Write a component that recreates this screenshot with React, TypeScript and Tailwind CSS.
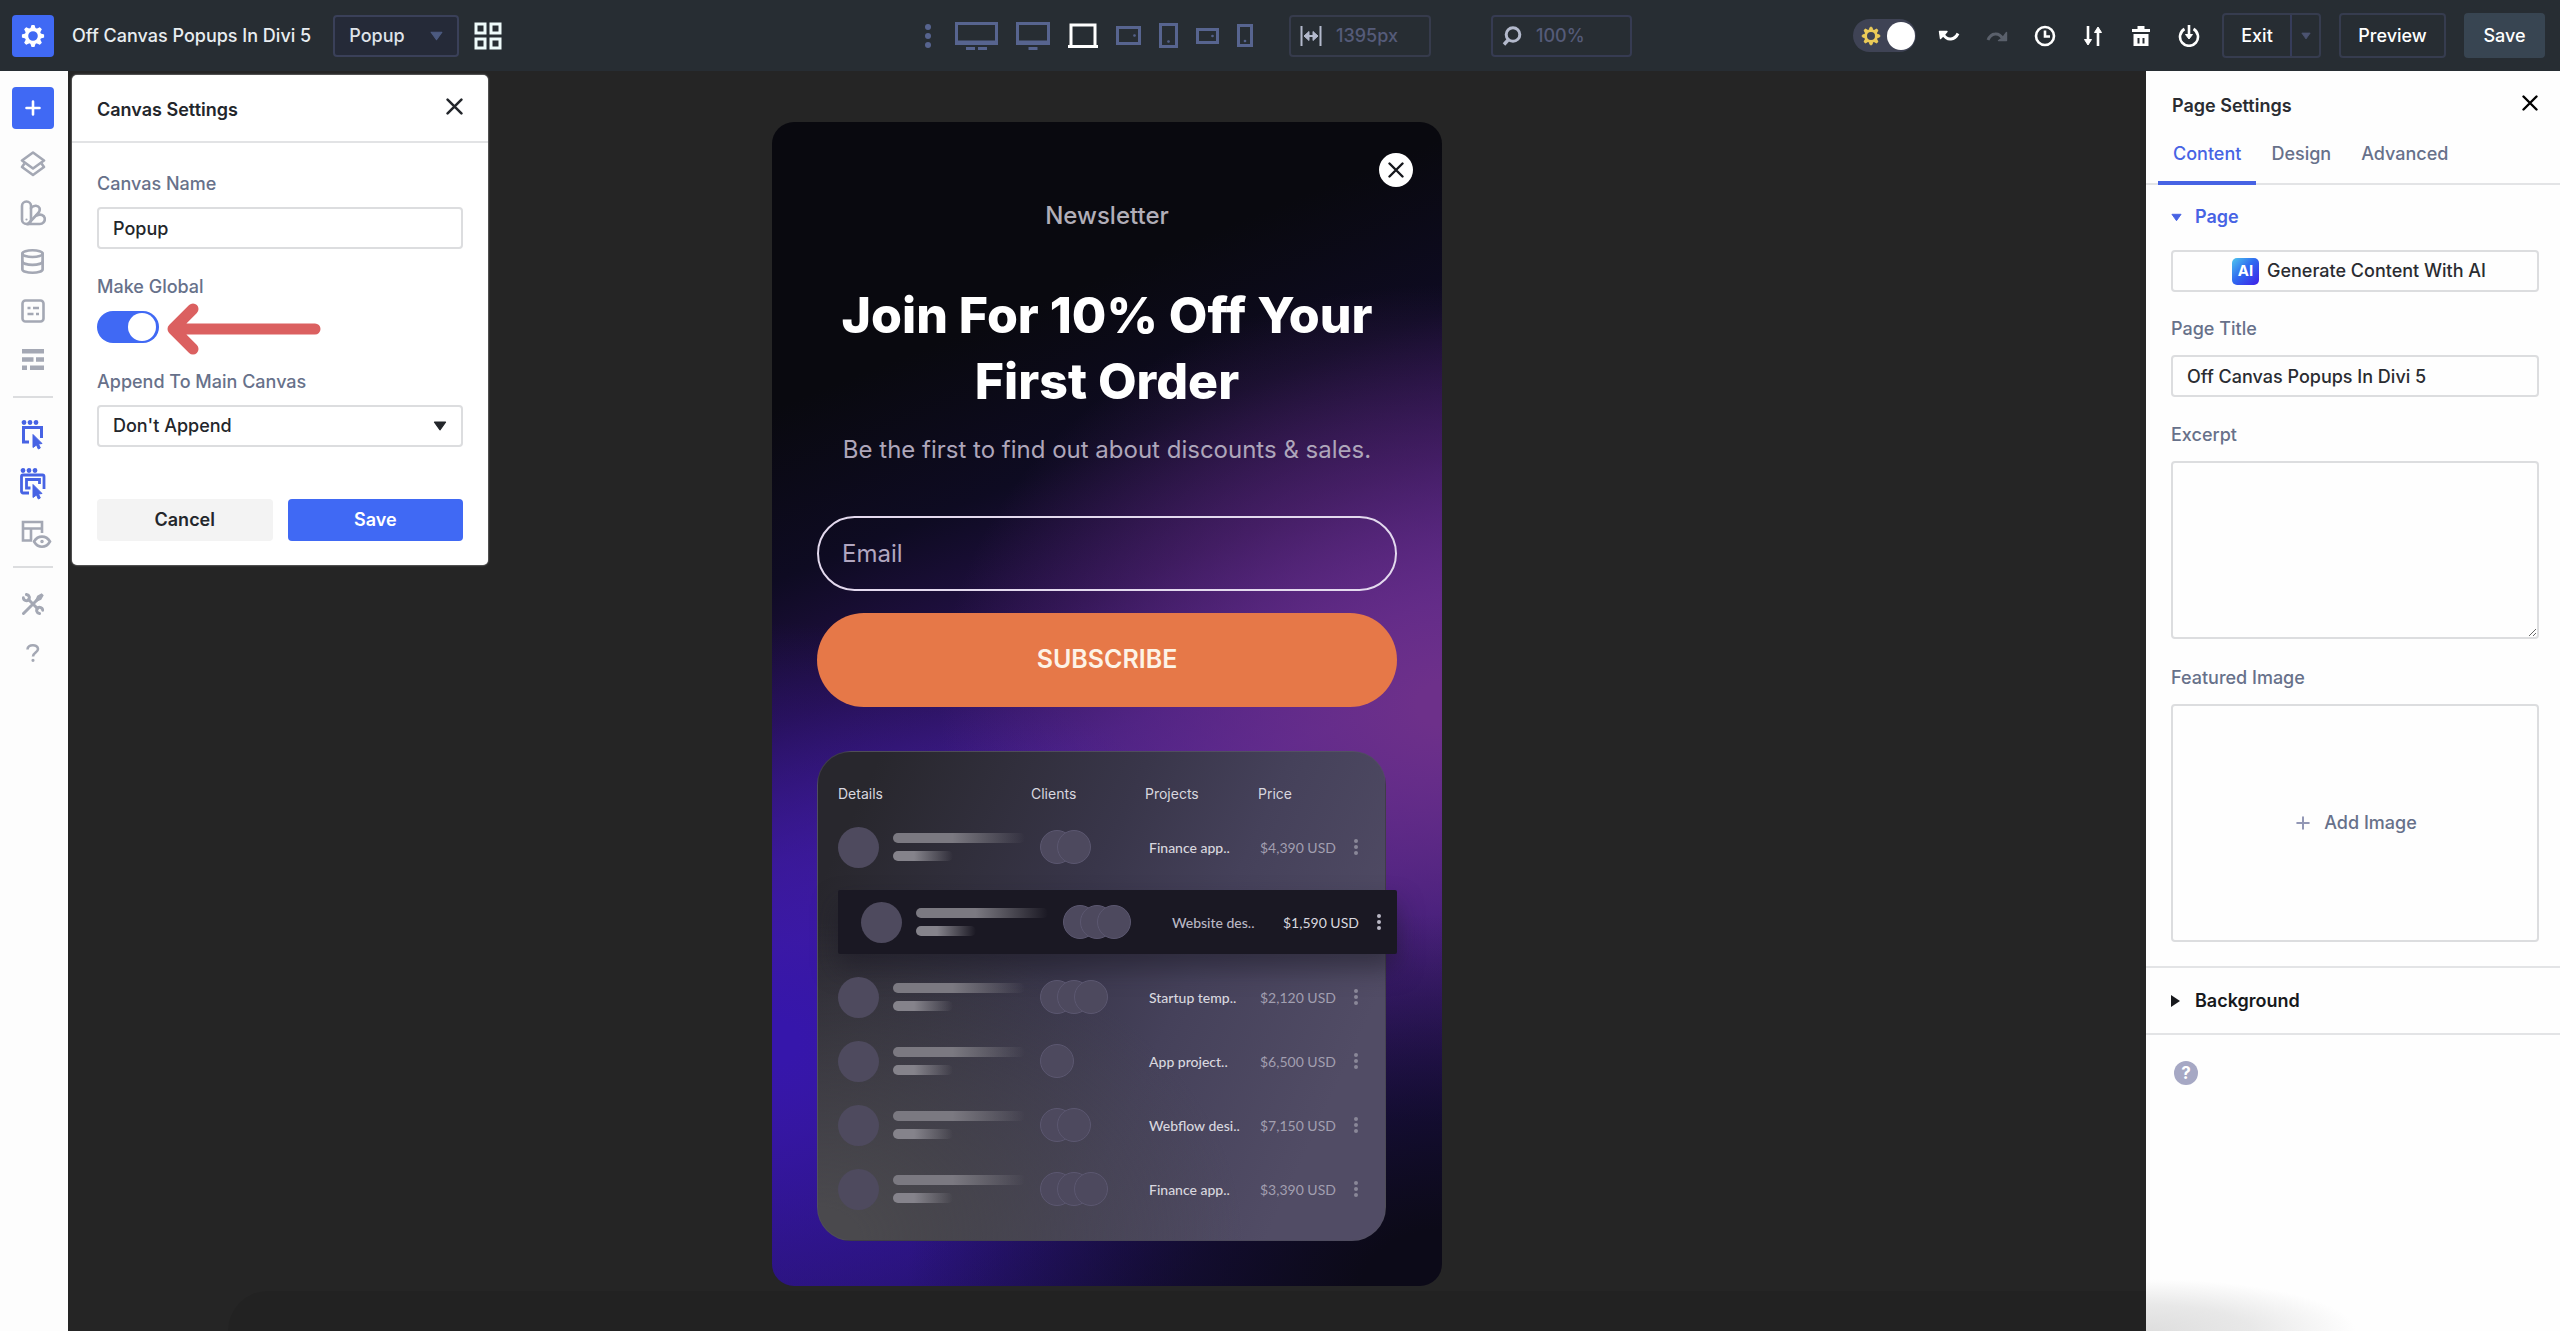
import React from 'react';
import { Database, Plus } from 'lucide-react';
import clsx from 'clsx';

interface Device {
  label: string;
  width: number;
  height: number;
  shape: React.ReactNode;
  active?: boolean;
}

interface ProjectRow {
  project: string;
  price: string;
  clients: number;
  highlighted?: boolean;
}

const devices: Device[] = [
  {
    label: 'Widescreen',
    width: 43,
    height: 28,
    shape: (
      <>
        <path d="M1.5 1.5h40v20h-40z" />
        <path d="M1 20.5h41" strokeWidth={4} />
        <path d="M11 26.5h9M23 26.5h9" />
      </>
    ),
  },
  {
    label: 'Desktop',
    width: 34,
    height: 28,
    shape: (
      <>
        <path d="M1.5 1.5h31v20h-31z" />
        <path d="M1 20.5h32" strokeWidth={4} />
        <path d="M12.5 26.5h9" />
      </>
    ),
  },
  {
    label: 'Laptop',
    width: 30,
    height: 25,
    active: true,
    shape: (
      <>
        <path d="M3 23V2h24v21" />
        <path d="M0 23.5h30" />
      </>
    ),
  },
  {
    label: 'Tablet landscape',
    width: 25,
    height: 19,
    shape: (
      <>
        <path d="M1.5 1.5h22v16h-22z" />
        <circle cx="18.5" cy="9.5" r=".6" strokeWidth={1.5} />
      </>
    ),
  },
  {
    label: 'Tablet',
    width: 19,
    height: 25,
    shape: (
      <>
        <path d="M1.5 1.5h16v22h-16z" />
        <circle cx="9.5" cy="18.5" r=".6" strokeWidth={1.5} />
      </>
    ),
  },
  {
    label: 'Phone landscape',
    width: 23,
    height: 16,
    shape: (
      <>
        <path d="M1.5 1.5h20v13h-20z" />
        <circle cx="16.5" cy="8" r=".6" strokeWidth={1.5} />
      </>
    ),
  },
  {
    label: 'Phone',
    width: 16,
    height: 23,
    shape: (
      <>
        <path d="M1.5 1.5h13v20h-13z" />
        <circle cx="8" cy="17" r=".6" strokeWidth={1.5} />
      </>
    ),
  },
];

const projectRows: ProjectRow[] = [
  { project: 'Finance app..', price: '$4,390 USD', clients: 2 },
  { project: 'Website des..', price: '$1,590 USD', clients: 3, highlighted: true },
  { project: 'Startup temp..', price: '$2,120 USD', clients: 3 },
  { project: 'App project..', price: '$6,500 USD', clients: 1 },
  { project: 'Webflow desi..', price: '$7,150 USD', clients: 2 },
  { project: 'Finance app..', price: '$3,390 USD', clients: 3 },
];

const teeth = [0, 45, 90, 135, 180, 225, 270, 315];

function GearIcon({ className }: { className?: string }) {
  return (
    <svg className={className} viewBox="0 0 24 24" fill="none" stroke="currentColor" aria-hidden="true">
      <circle cx="12" cy="12" r="6.5" strokeWidth={3.4} />
      {teeth.map((angle) => (
        <path key={angle} d="M10 4.5 11 1.5h2l1 3z" fill="currentColor" strokeWidth={1.2} transform={`rotate(${angle} 12 12)`} />
      ))}
    </svg>
  );
}

function CloseIcon({ className }: { className?: string }) {
  return (
    <svg className={className} viewBox="0 0 16 16" fill="none" stroke="currentColor" strokeWidth={2.4} strokeLinecap="round" aria-hidden="true">
      <path d="M1.5 1.5l13 13M14.5 1.5l-13 13" />
    </svg>
  );
}

function CaretDown({ className }: { className?: string }) {
  return (
    <svg className={className} viewBox="0 0 12 9" fill="currentColor" stroke="currentColor" strokeLinejoin="round" aria-hidden="true">
      <path d="M1 1h10L6 8z" />
    </svg>
  );
}

function KebabDots({ className }: { className?: string }) {
  return (
    <svg className={className} viewBox="0 0 6 24" fill="currentColor" aria-hidden="true">
      <circle cx="3" cy="3" r="3" />
      <circle cx="3" cy="12" r="3" />
      <circle cx="3" cy="21" r="3" />
    </svg>
  );
}

function ToolbarButton({ label, className, children }: { label: string; className?: string; children: React.ReactNode }) {
  return (
    <button type="button" aria-label={label} className={clsx('flex w-[22px] justify-center', className ?? 'text-white')}>
      <svg className="size-[22px]" viewBox="0 0 22 22" fill="none" stroke="currentColor" strokeWidth={2.6} aria-hidden="true">
        {children}
      </svg>
    </button>
  );
}

function TopBar() {
  return (
    <header className="grid h-[71px] grid-cols-[1fr_auto_1fr] items-center bg-[#272d33] pl-3 pr-[15px] font-medium">
      <div className="flex items-center">
        <button type="button" aria-label="Builder settings" className="flex size-[42px] items-center justify-center rounded-[4px] bg-[#4069f4] text-white">
          <GearIcon className="size-6" />
        </button>
        <h1 className="ml-[18px] text-[18px] leading-6 text-[#e9edf1]">Off Canvas Popups In Divi 5</h1>
        <div className="relative ml-[22px]">
          <select aria-label="Active canvas" className="h-[42px] w-[126px] appearance-none rounded-[4px] border-2 border-[#3a4059] bg-[#252a38] pl-[14px] text-[18px] text-[#dfe3ea]">
            <option>Popup</option>
          </select>
          <CaretDown className="pointer-events-none absolute right-4 top-4 h-[10px] w-[13px] text-[#4c5a80]" />
        </div>
        <button type="button" aria-label="All canvases" className="ml-[15px] text-[#eefafa]">
          <svg className="size-7" viewBox="0 0 28 28" fill="none" stroke="currentColor" strokeWidth={3} aria-hidden="true">
            <path d="M2 2h9v9H2zM17 2h9v9h-9zM2 17h9v9H2zM17 17h9v9h-9z" />
          </svg>
        </button>
      </div>

      <div className="flex items-center text-[#57648f]">
        <button type="button" aria-label="Breakpoint options" className="mr-6">
          <KebabDots className="h-6 w-[6px]" />
        </button>
        <div className="flex items-center gap-[18px]">
          {devices.map((device) => (
            <button key={device.label} type="button" aria-label={device.label} className={clsx(device.active && 'text-white')}>
              <svg width={device.width} height={device.height} viewBox={`0 0 ${device.width} ${device.height}`} fill="none" stroke="currentColor" strokeWidth={3} aria-hidden="true">
                {device.shape}
              </svg>
            </button>
          ))}
        </div>
        <label className="ml-9 flex h-[42px] w-[142px] items-center gap-[14px] rounded-[4px] border-2 border-[#363b4c] pl-[9px]">
          <svg className="h-5 w-[22px] shrink-0 text-[#b3b9cc]" viewBox="0 0 22 20" fill="none" stroke="currentColor" strokeWidth={2} aria-hidden="true">
            <path d="M1.5 0v20M20.5 0v20M6 10h10" />
            <path d="M4 10l5-4.500v9zM18 10l-5-4.500v9z" fill="currentColor" strokeWidth={1} />
          </svg>
          <input aria-label="Canvas width" defaultValue="1395px" className="w-20 bg-transparent text-[18px] text-[#555b79] outline-none" />
        </label>
        <label className="ml-[60px] flex h-[42px] w-[141px] items-center gap-[14px] rounded-[4px] border-2 border-[#363b52] pl-[9px]">
          <svg className="size-5 shrink-0 text-[#b3b9cc]" viewBox="0 0 20 20" fill="none" stroke="currentColor" strokeWidth={3} aria-hidden="true">
            <circle cx="11" cy="8.5" r="6.8" />
            <path d="M6.5 13.5L2 18.5" strokeWidth={3.4} />
          </svg>
          <input aria-label="Zoom level" defaultValue="100%" className="w-20 bg-transparent text-[18px] text-[#555b79] outline-none" />
        </label>
      </div>

      <div className="flex items-center justify-end">
        <label className="relative flex h-[33px] w-[63px] items-center rounded-full bg-[#3f4355] pl-2">
          <input type="checkbox" defaultChecked aria-label="Light mode" className="sr-only" />
          <GearIcon className="size-5 text-[#eccb58]" />
          <span className="ml-[6px] size-7 rounded-full bg-white" />
        </label>
        <div className="ml-[22px] flex items-center gap-[26px]">
          <ToolbarButton label="Undo">
            <path d="M5 9c2 3.500 4.500 5.500 8 5 3.500-.3 5.500-2.500 7-5.500" strokeWidth={3} />
            <path d="M1.500 6.500h7.500l-2.500 3-4 4z" fill="currentColor" strokeWidth={1.400} strokeLinejoin="round" />
          </ToolbarButton>
          <ToolbarButton label="Redo" className="text-[#5a606b]">
            <path d="M2 15c1.500-3.500 3.500-5.700 7-6 3.500-.4 6 1.500 8 5" strokeWidth={3} />
            <path d="M20.500 7.500v8h-8l4-2.500z" fill="currentColor" strokeWidth={1.400} strokeLinejoin="round" />
          </ToolbarButton>
          <ToolbarButton label="History">
            <circle cx="11" cy="11" r="9" />
            <path d="M11 5.5v6h5" />
          </ToolbarButton>
          <ToolbarButton label="Portability">
            <path d="M6 1v14M16 21V7" />
            <path d="M2.5 14.5h7L6 20zM12.5 7.500h7L16 2z" fill="currentColor" strokeWidth={1} />
          </ToolbarButton>
          <ToolbarButton label="Clear layout">
            <path d="M2 5.5h18" strokeWidth={3} />
            <path d="M7.500 2.500h7" strokeWidth={3} />
            <path d="M3.500 9h15v12h-15zM7.500 13v5.500h2V13zM12.500 13v5.500h2V13z" fill="currentColor" fillRule="evenodd" stroke="none" />
          </ToolbarButton>
          <ToolbarButton label="Save to library">
            <path d="M6.5 4a9 9 0 1 0 9 0M11 0v12" />
            <path d="M7.5 9.500h7L11 14z" fill="currentColor" strokeWidth={1} />
          </ToolbarButton>
        </div>
        <div className="ml-[22px] flex h-[45px] rounded-[4px] border-2 border-[#363c4f] text-[18px] text-white">
          <button type="button" className="w-[68px] border-r-2 border-[#363c5a]">Exit</button>
          <button type="button" aria-label="Exit options" className="flex w-[27px] items-center justify-center text-[#4c5370]">
            <CaretDown className="h-2 w-[10px]" />
          </button>
        </div>
        <button type="button" className="ml-[18px] h-[45px] w-[107px] rounded-[4px] border-2 border-[#363c4f] text-[18px] text-white">Preview</button>
        <button type="button" className="ml-[18px] h-[45px] w-[81px] rounded-[4px] bg-[#384552] text-[18px] text-white">Save</button>
      </div>
    </header>
  );
}

function SideButton({ label, active, children }: { label: string; active?: boolean; children: React.ReactNode }) {
  return (
    <button type="button" aria-label={label} className={clsx('flex h-[49px] w-full items-center justify-center', active ? 'text-[#4763e4]' : 'text-[#a4a8b4]')}>
      {children}
    </button>
  );
}

function Sidebar() {
  return (
    <nav aria-label="Builder tools" className="flex w-[68px] shrink-0 flex-col items-center bg-[#fdfdfd] pr-[3px] pt-4">
      <button type="button" aria-label="Add" className="flex size-[42px] shrink-0 items-center justify-center rounded-[4px] bg-[#4069f4] text-white">
        <svg className="size-4" viewBox="0 0 16 16" stroke="currentColor" strokeWidth={2.6} strokeLinecap="round" aria-hidden="true">
          <path d="M8 1.5v13M1.5 8h13" />
        </svg>
      </button>
      <div className="mt-[10px] w-full">
        <SideButton label="Layers">
          <svg className="size-[26px]" viewBox="0 0 26 26" fill="none" stroke="currentColor" strokeWidth={2.6} strokeLinejoin="round" aria-hidden="true">
            <path d="M13 1.5L24 9.500 13 17.500 2 9.500z" />
            <path d="M4.5 12.500L2 16l11 8 11-8-2.500-3.500" />
          </svg>
        </SideButton>
        <SideButton label="Presets">
          <svg className="size-[26px]" viewBox="0 0 26 26" fill="none" stroke="currentColor" strokeWidth={2.6} strokeLinejoin="round" strokeLinecap="round" aria-hidden="true">
            <path d="M2 6a4.5 4.500 0 0 1 9 0v14a4 4 0 0 1-4 4H6.500A4.500 4.500 0 0 1 2 19.500z" />
            <path d="M11 8c3-3.500 7.500-2.500 8.500 0 .8 2 0 3.500-1.200 5L8 24" />
            <path d="M16.500 15.500c4-2 7.800-.5 8.300 3 .3 3-2 5.500-5 5.500H7" />
            <circle cx="6.5" cy="19.5" r=".5" strokeWidth={1.2} />
          </svg>
        </SideButton>
        <SideButton label="Dynamic data">
          <Database size={27} strokeWidth={2.4} />
        </SideButton>
        <SideButton label="Forms">
          <svg className="size-6" viewBox="0 0 24 24" fill="none" stroke="currentColor" strokeWidth={2.6} aria-hidden="true">
            <rect x="1.5" y="1.5" width="21" height="21" rx="3" />
            <path d="M6.5 9h3M12 9h6M6.500 15h6M15 15h3" />
          </svg>
        </SideButton>
        <SideButton label="Wireframe">
          <svg className="h-[21px] w-[22px]" viewBox="0 0 22 21" fill="none" stroke="currentColor" strokeWidth={4.4} aria-hidden="true">
            <path d="M0 2.200h22M0 10.500h11.500M14 10.500h8M0 18.800h5M8 18.800h14" />
          </svg>
        </SideButton>
      </div>
      <hr className="mt-3 w-10 border-t-2 border-[#dcdddf]" />
      <div className="mt-3 w-full">
        <SideButton label="Hover mode" active>
          <svg className="h-[30px] w-6" viewBox="0 0 24 30" fill="none" stroke="currentColor" strokeWidth={3} aria-hidden="true">
            <circle cx="3" cy="2.5" r="1.2" strokeWidth={2.4} />
            <circle cx="9" cy="2.5" r="1.2" strokeWidth={2.4} />
            <circle cx="15" cy="2.5" r="1.2" strokeWidth={2.4} />
            <path d="M8 22H2.500V7.500h18V18" />
            <path d="M12 14.500l9 9-3.500.5 1.800 4-2 1-1.800-4-3.500 2.500z" fill="currentColor" strokeWidth={1} />
          </svg>
        </SideButton>
        <SideButton label="Click mode" active>
          <svg className="h-8 w-[26px]" viewBox="0 0 26 32" fill="none" stroke="currentColor" strokeWidth={2.8} aria-hidden="true">
            <circle cx="3" cy="2.5" r="1.2" strokeWidth={2.4} />
            <circle cx="9" cy="2.5" r="1.2" strokeWidth={2.4} />
            <circle cx="15" cy="2.5" r="1.2" strokeWidth={2.4} />
            <path d="M9 25H3a1.500 1.500 0 0 1-1.500-1.500V8.500A1.500 1.500 0 0 1 3 7h19.500A1.500 1.500 0 0 1 24 8.500V21" />
            <path d="M10.500 20H6.500v-8.500h13V16" />
            <path d="M13 16.500l9 9-3.500.5 1.800 4-2 1-1.800-4-3.500 2.500z" fill="currentColor" strokeWidth={1} />
          </svg>
        </SideButton>
        <SideButton label="Visibility">
          <svg className="ml-[7px] mt-1 h-[29px] w-[31px]" viewBox="0 0 31 29" fill="none" stroke="currentColor" strokeWidth={2.6} aria-hidden="true">
            <path d="M11 20.500H2V2h19v11M2 8.500h19M10 8.500v12" />
            <path d="M13 21.500c4-6.500 12-6.500 16 0-4 7-12 7-16 0z" />
            <circle cx="21" cy="21.5" r="1" strokeWidth={1.5} />
          </svg>
        </SideButton>
      </div>
      <hr className="mt-[9px] w-10 border-t-2 border-[#dcdddf]" />
      <div className="mt-[11px] w-full">
        <SideButton label="Tools">
          <svg className="size-[22px]" viewBox="0 0 22 22" fill="none" stroke="currentColor" strokeWidth={3} strokeLinecap="round" aria-hidden="true">
            <path d="M1.500 20.500L15 7M6.500 6.500l9 9" />
            <path d="M14 8l2-4.500 3.500-2 1 1-2 3.500z" fill="currentColor" strokeWidth={2} />
            <path d="M4.500 1.500c3 .5 3.500 3.500 2 5.500-2 1.500-5 .5-5.200-2.200M17.500 20.500c-3-.5-3.500-3.500-2-5.500 2-1.500 5-.5 5.200 2.200" />
          </svg>
        </SideButton>
        <SideButton label="Help">
          <svg className="h-[18px] w-[14px]" viewBox="0 0 14 18" fill="none" stroke="currentColor" strokeWidth={2.6} aria-hidden="true">
            <path d="M1.500 5.500C1.500 0 12 0 12 5c0 3.500-5 3.500-5 7.500" />
            <circle cx="7" cy="16.3" r=".8" strokeWidth={1.6} />
          </svg>
        </SideButton>
      </div>
    </nav>
  );
}

function CanvasSettings() {
  return (
    <section
      aria-label="Canvas settings"
      className="absolute left-1 top-1 w-[416px] rounded-[5px] bg-white pb-6 text-[18px] font-medium leading-6 text-[#23262b] shadow-[0_0_2px_#c9c9c9]"
    >
      <div className="flex h-[68px] items-center justify-between border-b-2 border-[#e2e3e5] px-[25px] pt-1">
        <h2 className="font-semibold">Canvas Settings</h2>
        <button type="button" aria-label="Close canvas settings" className="pb-[7px]">
          <CloseIcon className="size-[17px]" />
        </button>
      </div>
      <form className="flex flex-col px-[25px] pt-[29px]">
        <label htmlFor="canvas-name" className="text-[#67718a]">Canvas Name</label>
        <input id="canvas-name" defaultValue="Popup" className="mt-[11px] h-[42px] rounded-[4px] border-2 border-[#dcdddf] px-[14px]" />

        <label htmlFor="make-global" className="mt-[26px] text-[#67718a]">Make Global</label>
        <div className="relative mt-3 h-8">
          <label className="flex h-8 w-[62px] items-center justify-end rounded-full bg-[#4069f4] pr-[3px]">
            <input id="make-global" type="checkbox" defaultChecked className="sr-only" />
            <span className="size-7 rounded-full bg-white" />
          </label>
          {/* callout arrow */}
          <svg className="absolute -top-2 left-[70px] h-[52px] w-[154px] text-[#db6060]" viewBox="0 0 154 52" fill="none" stroke="currentColor" strokeWidth={12} strokeLinecap="round" strokeLinejoin="round" aria-hidden="true">
            <path d="M9 26h139M26 6L6 26l20 20" strokeWidth={11} />
            <path d="M14 19v14" strokeWidth={10} />
          </svg>
        </div>

        <label htmlFor="append-to" className="mt-[27px] text-[#67718a]">Append To Main Canvas</label>
        <div className="relative mt-[11px]">
          <select id="append-to" className="h-[42px] w-full appearance-none rounded-[4px] border-2 border-[#dcdddf] bg-white px-[14px]">
            <option>Don't Append</option>
          </select>
          <CaretDown className="pointer-events-none absolute right-4 top-4 h-[10px] w-[14px]" />
        </div>

        <div className="mt-[52px] grid grid-cols-2 gap-[15px]">
          <button type="button" className="h-[42px] rounded-[4px] bg-[#f3f3f3] font-semibold">Cancel</button>
          <button type="button" className="h-[42px] rounded-[4px] bg-[#4069f4] font-semibold text-white">Save</button>
        </div>
      </form>
    </section>
  );
}

function ProjectsCard() {
  return (
    <div className="mr-[11px] mt-11 rounded-[34px] border border-[#55536180] bg-[radial-gradient(ellipse_75%_65%_at_0%_100%,#4a494d_10%,#4a494d00),linear-gradient(115deg,#28272d_8%,#39364a_42%,#45415a_60%,#514c65_85%)] py-[19px] pl-5 font-['Lato',sans-serif] text-[14px] text-[#d8d7df]">
      <table className="block">
        <thead className="block">
          <tr className="grid h-11 grid-cols-[193px_114px_113px_97px_auto] items-center text-left font-['Inter',sans-serif]">
            <th className="font-normal">Details</th>
            <th className="font-normal">Clients</th>
            <th className="font-normal">Projects</th>
            <th className="font-normal">Price</th>
          </tr>
        </thead>
        <tbody className="block">
          {projectRows.map((row, index) => (
            <tr
              key={index}
              className={clsx(
                'grid h-16 grid-cols-[202px_109px_111px_94px_auto] items-center',
                row.highlighted && '-mr-[12px] my-[11px] rounded-[2px] bg-[#1a1823] pl-[23px] shadow-[0_14px_24px_#1a182380]'
              )}
            >
              <td className="flex items-center gap-[14px]">
                <span className="size-[41px] rounded-full bg-[#4e4a5e]" />
                <span className="flex flex-col gap-2">
                  <span className="h-[10px] w-[132px] rounded-full bg-[linear-gradient(90deg,#7b7981_45%,#7b797100)]" />
                  <span className="h-[10px] w-[60px] rounded-full bg-[linear-gradient(90deg,#85838b_35%,#7b797100)]" />
                </span>
              </td>
              <td className="flex flex-row-reverse justify-end pl-[17px]">
                {Array.from({ length: row.clients }, (_, i) => (
                  <span key={i} className="-ml-[17px] size-[34px] rounded-full border border-[#5b5770] bg-[#4d495e]" />
                ))}
              </td>
              <td className={clsx('font-medium', row.highlighted && 'text-[#b9b7c4]')}>{row.project}</td>
              <td className={clsx(!row.highlighted && 'text-[#a29fb0]')}>{row.price}</td>
              <td>
                <KebabDots className={clsx('h-[18px] w-[4px]', row.highlighted ? 'text-[#b9b7c4]' : 'text-[#8a8798]')} />
              </td>
            </tr>
          ))}
        </tbody>
      </table>
    </div>
  );
}

function NewsletterPopup() {
  return (
    <section
      aria-label="Newsletter popup"
      className="relative w-[670px] rounded-[22px] bg-[radial-gradient(ellipse_80%_32%_at_100%_100%,#0c0a18_15%,#0c0a1800),radial-gradient(ellipse_75%_36%_at_100%_50%,#6d308a_5%,#6d308a80_50%,#6d308a00),radial-gradient(ellipse_75%_36%_at_0%_79%,#3616ab_5%,#3616ab80_50%,#3616ab00),linear-gradient(158deg,#09090f_20%,#0e0b22_32%,#241048_42%,#3f1c80_52%,#4a2190_58%,#2a1470_74%,#1b1050_95%)] px-[45px] pb-[45px] pt-[76px]"
    >
      <button type="button" aria-label="Close popup" className="absolute right-[29px] top-[31px] flex size-[34px] items-center justify-center rounded-full bg-white text-[#15171c]">
        <CloseIcon className="size-4" />
      </button>
      <p className="text-center text-[24px] font-medium leading-9 text-[#b1aeb8]">Newsletter</p>
      <h2 className="mt-12 text-center text-[50px] font-extrabold leading-[66px] text-white">Join For 10% Off Your First Order</h2>
      <p className="mt-[18px] text-center text-[24px] leading-9 text-[#aea6ba]">Be the first to find out about discounts &amp; sales.</p>
      <form>
        <input type="email" aria-label="Email" placeholder="Email" className="mt-12 h-[75px] w-full rounded-full border-2 border-[#e3d9ee] bg-transparent px-[23px] text-[24px] text-white placeholder:text-[#b1a6c0]" />
        <button type="button" className="mt-[22px] h-[94px] w-full rounded-full bg-[#e67848] text-[25px] font-semibold text-[#fdf3e6]">SUBSCRIBE</button>
      </form>
      <ProjectsCard />
    </section>
  );
}

function PageSettings() {
  return (
    <aside className="relative w-[414px] shrink-0 bg-[#fefefe] text-[18px] font-medium leading-6 text-[#2a2c31]">
      <div className="border-b-2 border-[#e3e4e6] pt-[23px]">
        <div className="flex items-center justify-between pl-[26px] pr-[22px]">
          <h2 className="font-semibold">Page Settings</h2>
          <button type="button" aria-label="Close page settings" className="pb-[6px] text-black">
            <CloseIcon className="size-4" />
          </button>
        </div>
        <div role="tablist" className="-mb-0.5 mt-6 flex pl-3 text-[#67718a]">
          <button type="button" role="tab" aria-selected="true" className="border-b-4 border-[#4763e4] px-[15px] pb-[15px] text-[#4763e4]">Content</button>
          <button type="button" role="tab" aria-selected="false" className="border-b-4 border-transparent px-[15px] pb-[15px]">Design</button>
          <button type="button" role="tab" aria-selected="false" className="border-b-4 border-transparent px-[15px] pb-[15px]">Advanced</button>
        </div>
      </div>

      <div className="flex flex-col px-[25px] pb-6 pr-[21px] pt-5">
        <button type="button" aria-expanded="true" className="flex items-center gap-[13px] self-start font-semibold text-[#4763e4]">
          <CaretDown className="h-[9px] w-[11px]" />
          Page
        </button>
        <button type="button" className="mt-[21px] flex h-[42px] items-center justify-center gap-2 rounded-[4px] border-2 border-[#dcdddf] pl-2">
          <span className="flex size-[27px] items-center justify-center rounded-[5px] bg-[linear-gradient(135deg,#4fc7ee,#2f6bf0_45%,#3f1fe8)] text-[15px] font-bold text-white">AI</span>
          Generate Content With AI
        </button>

        <label htmlFor="page-title" className="mt-[25px] text-[#67718a]">Page Title</label>
        <input id="page-title" defaultValue="Off Canvas Popups In Divi 5" className="mt-[14px] h-[42px] rounded-[4px] border-2 border-[#dcdddf] px-[14px]" />

        <label htmlFor="excerpt" className="mt-[26px] text-[#67718a]">Excerpt</label>
        <textarea id="excerpt" className="mt-[14px] h-[178px] rounded-[4px] border-2 border-[#dcdddf] px-[14px] py-2" />

        <h3 className="mt-[27px] text-[#67718a]">Featured Image</h3>
        <button type="button" className="mt-[14px] flex h-[238px] items-center justify-center gap-[11px] rounded-[4px] border-2 border-[#dcdddf] text-[#67718a]">
          <Plus size={20} strokeWidth={2.4} className="text-[#9297b5]" />
          Add Image
        </button>
      </div>

      <button type="button" aria-expanded="false" className="flex h-[69px] w-full items-center gap-[15px] border-y-2 border-[#e3e4e6] pl-[25px] font-semibold text-[#17191c]">
        <svg className="h-3 w-[9px]" viewBox="0 0 9 12" fill="currentColor" aria-hidden="true">
          <path d="M0 0v12l9-6z" />
        </svg>
        Background
      </button>
      <button type="button" aria-label="Help" className="ml-7 mt-[26px] flex size-6 items-center justify-center rounded-full bg-[#a6a8c4] text-[17px] font-bold text-white">?</button>

      <div className="pointer-events-none absolute bottom-0 left-0 h-[52px] w-[210px] bg-[radial-gradient(ellipse_210px_52px_at_0%_100%,#dedede,#e8e8e8_50%,#fefefe00)]" />
    </aside>
  );
}

export default function App() {
  return (
    <div className="flex min-h-screen flex-col bg-[#252525] font-['Inter',sans-serif]">
      <TopBar />
      <div className="flex flex-1">
        <Sidebar />
        <main className="relative flex flex-1 items-start justify-center pb-[45px] pt-[51px]">
          <CanvasSettings />
          <NewsletterPopup />
          <div className="pointer-events-none absolute bottom-0 left-40 right-0 h-10 rounded-tl-[60px] bg-black/8" />
        </main>
        <PageSettings />
      </div>
    </div>
  );
}
